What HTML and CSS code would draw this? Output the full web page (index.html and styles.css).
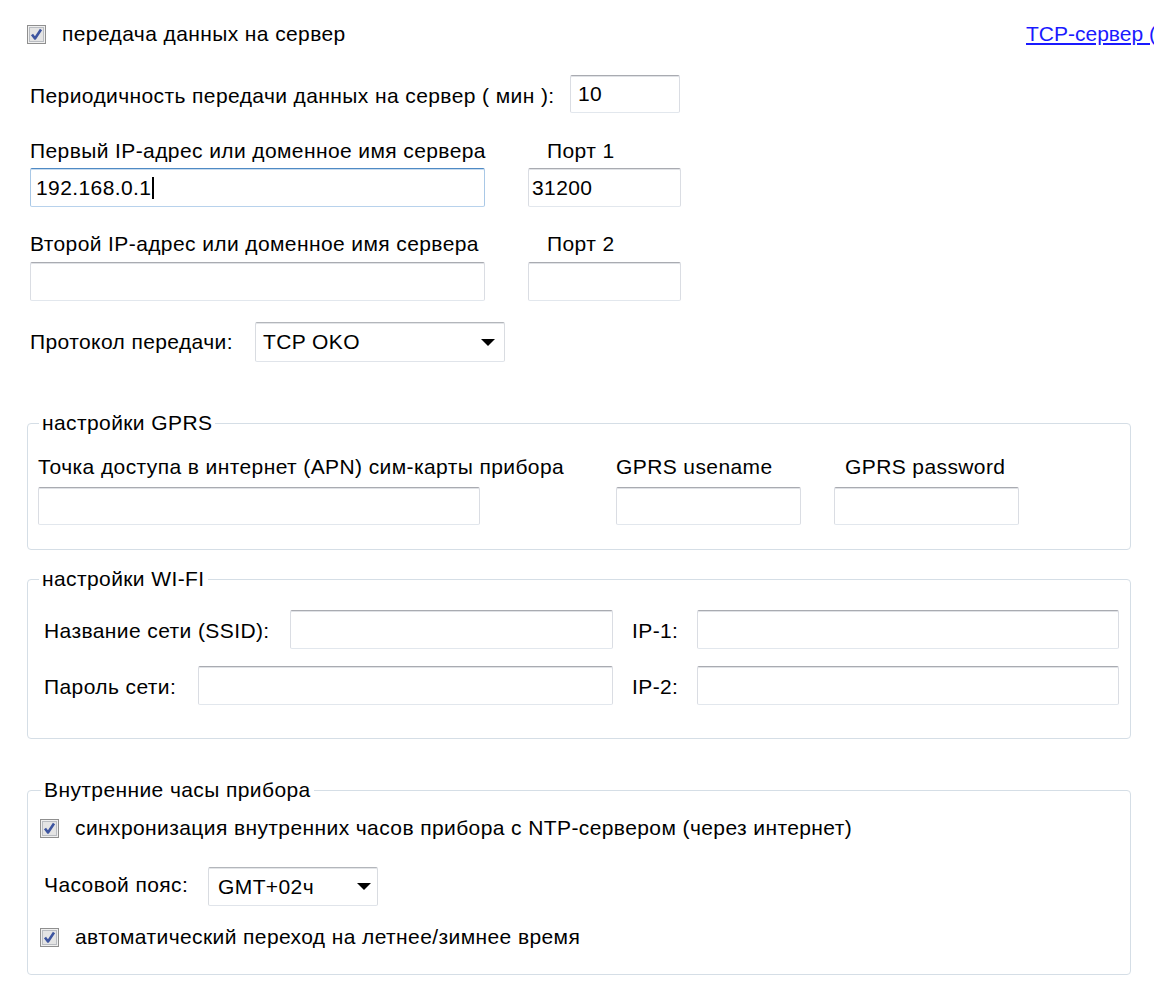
FILE: index.html
```html
<!DOCTYPE html>
<html lang="ru">
<head>
<meta charset="utf-8">
<link rel="stylesheet" href="styles.css">
</head>
<body>
<div class="page">
  <div class="top-row">
    <label class="chk">
      <svg class="box" width="19" height="19" viewBox="0 0 19 19"><rect x="0.5" y="0.5" width="18" height="18" fill="#f0f0f0" stroke="#8f8f8f"/><rect x="2.5" y="2.5" width="14" height="14" fill="#e4e4e4" stroke="#b9bcc1"/><path d="M5 9.5 L8 13.5 L14 4.5" fill="none" stroke="#3d55a0" stroke-width="2.6" stroke-linejoin="round"/></svg>
      <span class="top-lbl">передача данных на сервер</span>
    </label>
    <a class="link" href="#">TCP-сервер (</a>
  </div>

  <div class="period-row">
    <span class="lbl period-lbl">Периодичность передачи данных на сервер ( мин ):</span>
    <div class="tb w-period pad7">10</div>
  </div>

  <div class="srv">
    <span class="lbl">Первый IP-адрес или доменное имя сервера</span>
    <span class="lbl port-lbl">Порт 1</span>
    <div class="tb focused pad5">192.168.0.1<span class="caret"></span></div>
    <div class="tb pad3">31200</div>
  </div>

  <div class="srv srv2">
    <span class="lbl">Второй IP-адрес или доменное имя сервера</span>
    <span class="lbl port-lbl">Порт 2</span>
    <div class="tb"></div>
    <div class="tb"></div>
  </div>

  <div class="proto-row">
    <span class="lbl proto-lbl">Протокол передачи:</span>
    <div class="cb cb-proto"><span>TCP OKO</span><span class="arrow"></span></div>
  </div>

  <fieldset class="grp gprs">
    <legend>настройки GPRS</legend>
    <div class="gprs-grid">
      <span class="lbl">Точка доступа в интернет (APN) сим-карты прибора</span>
      <span class="lbl">GPRS usename</span>
      <span class="lbl ind11">GPRS password</span>
      <div class="tb h38 w-apn"></div>
      <div class="tb h38 w-gprs"></div>
      <div class="tb h38 w-gprs"></div>
    </div>
  </fieldset>

  <fieldset class="grp wifi">
    <legend>настройки WI-FI</legend>
    <div class="wifi-row">
      <div class="wl"><span class="lbl ssid-lbl">Название сети (SSID):</span><div class="tb grow"></div></div>
      <div class="wr"><span class="lbl">IP-1:</span><div class="tb w-ip"></div></div>
    </div>
    <div class="wifi-row second">
      <div class="wl"><span class="lbl pass-lbl">Пароль сети:</span><div class="tb grow"></div></div>
      <div class="wr"><span class="lbl">IP-2:</span><div class="tb w-ip"></div></div>
    </div>
  </fieldset>

  <fieldset class="grp clock">
    <legend>Внутренние часы прибора</legend>
    <label class="chk">
      <svg class="box" width="19" height="19" viewBox="0 0 19 19"><rect x="0.5" y="0.5" width="18" height="18" fill="#f0f0f0" stroke="#8f8f8f"/><rect x="2.5" y="2.5" width="14" height="14" fill="#e4e4e4" stroke="#b9bcc1"/><path d="M5 9.5 L8 13.5 L14 4.5" fill="none" stroke="#3d55a0" stroke-width="2.6" stroke-linejoin="round"/></svg>
      <span>синхронизация внутренних часов прибора с NTP-сервером (через интернет)</span>
    </label>
    <div class="tz-row">
      <span class="lbl tz-lbl">Часовой пояс:</span>
      <div class="cb cb-tz"><span>GMT+02ч</span><span class="arrow"></span></div>
    </div>
    <label class="chk chk-last">
      <svg class="box" width="19" height="19" viewBox="0 0 19 19"><rect x="0.5" y="0.5" width="18" height="18" fill="#f0f0f0" stroke="#8f8f8f"/><rect x="2.5" y="2.5" width="14" height="14" fill="#e4e4e4" stroke="#b9bcc1"/><path d="M5 9.5 L8 13.5 L14 4.5" fill="none" stroke="#3d55a0" stroke-width="2.6" stroke-linejoin="round"/></svg>
      <span>автоматический переход на летнее/зимнее время</span>
    </label>
  </fieldset>
</div>
</body>
</html>
```

FILE: styles.css
```css
html, body {
  margin: 0;
  padding: 0;
  background: #ffffff;
  overflow: hidden;
}
body {
  font-family: "Liberation Sans", Arial, sans-serif;
  font-size: 21px;
  line-height: 24px;
  letter-spacing: 0.4px;
  color: #000;
}
.page {
  width: 1154px;
  padding: 22px 0 0 0;
  box-sizing: border-box;
}
.lbl { white-space: nowrap; }

.chk {
  display: flex;
  align-items: center;
  height: 24px;
  white-space: nowrap;
}
.chk .box { flex: none; margin-right: 16px; }

.top-row {
  display: flex;
  align-items: center;
  height: 24px;
  padding-left: 27px;
  white-space: nowrap;
}
.top-lbl { display: inline-block; width: 964px; flex: none; }
.link {
  color: #1a1aff;
  text-decoration: underline;
  flex: none;
  letter-spacing: 0;
}

.tb {
  box-sizing: border-box;
  height: 39px;
  background: #fff;
  border: 1px solid;
  border-color: #a9abb1 #dadde3 #e2e7ed #dadde3;
  box-shadow: inset 0 1px 0 #e0e2e6;
  border-radius: 2px;
  display: flex;
  align-items: center;
  white-space: nowrap;
}
.tb.focused {
  border-color: #4f8ac4 #a9c8e6 #b8d2ec #a9c8e6;
  box-shadow: inset 0 1px 0 #c9dcef;
}
.h38 { height: 38px; }
.pad3 { padding-left: 3px; }
.pad5 { padding-left: 5px; }
.pad7 { padding-left: 7px; }
.caret {
  display: inline-block;
  width: 2px;
  height: 22px;
  background: #000;
  margin-left: 1px;
}

.period-row {
  display: flex;
  align-items: center;
  margin-top: 29px;
  padding-left: 30px;
}
.period-lbl { width: 540px; flex: none; padding-top: 3px; }
.w-period { width: 110px; height: 38px; }

.srv {
  display: grid;
  grid-template-columns: 455px 153px;
  column-gap: 43px;
  row-gap: 5px;
  margin-top: 26px;
  padding-left: 30px;
}
.srv2 { margin-top: 25px; row-gap: 6px; }
.port-lbl { padding-left: 19px; }

.proto-row {
  display: flex;
  align-items: center;
  margin-top: 21px;
  padding-left: 30px;
}
.proto-lbl { width: 225px; flex: none; }
.cb {
  box-sizing: border-box;
  height: 40px;
  display: flex;
  align-items: center;
  justify-content: space-between;
  background: #fff;
  border: 1px solid;
  border-color: #b3b6bb #d9dce1 #e0e4ea #d9dce1;
  box-shadow: inset 0 1px 0 #e3e5e8;
  border-radius: 2px;
  white-space: nowrap;
}
.cb-proto { width: 250px; padding: 0 9px 0 7px; }
.arrow {
  width: 0;
  height: 0;
  border-left: 7px solid transparent;
  border-right: 7px solid transparent;
  border-top: 7px solid #000;
}

.grp {
  margin: 0 0 0 27px;
  width: 1104px;
  box-sizing: border-box;
  border: 1px solid #d5dee6;
  border-radius: 4px;
  padding: 0;
}
.grp legend {
  padding: 0 3px;
  margin-left: 0;
  white-space: nowrap;
}

.gprs {
  margin-top: 49px;
  padding: 20px 0 24px 10px;
}
.gprs legend { margin-left: 1px; }
.gprs-grid {
  display: grid;
  grid-template-columns: 578px 218px 185px;
  row-gap: 8px;
}
.w-apn { width: 442px; }
.w-gprs { width: 185px; }
.ind11 { padding-left: 11px; }

.wifi {
  margin-top: 17px;
  padding: 19px 0 33px 16px;
}
.wifi legend { margin-left: -5px; }
.wifi-row {
  display: flex;
  align-items: center;
}
.wifi-row.second { margin-top: 17px; }
.wifi-row .lbl { padding-top: 3px; }
.wl {
  width: 569px;
  display: flex;
  align-items: center;
}
.ssid-lbl { width: 246px; flex: none; }
.pass-lbl { width: 154px; flex: none; }
.grow { flex: 1; }
.wr {
  width: 487px;
  margin-left: 19px;
  display: flex;
  align-items: center;
  justify-content: space-between;
}
.w-ip { width: 422px; }

.clock {
  margin-top: 39px;
  padding: 14px 0 25px 12px;
}
.clock legend { margin-left: 1px; }
.tz-row {
  display: flex;
  align-items: center;
  margin-top: 27px;
  padding-left: 4px;
}
.tz-lbl { width: 164px; flex: none; padding-bottom: 3px; }
.cb-tz { width: 170px; height: 39px; padding: 0 6px 0 9px; }
.chk-last { margin-top: 19px; }
```
